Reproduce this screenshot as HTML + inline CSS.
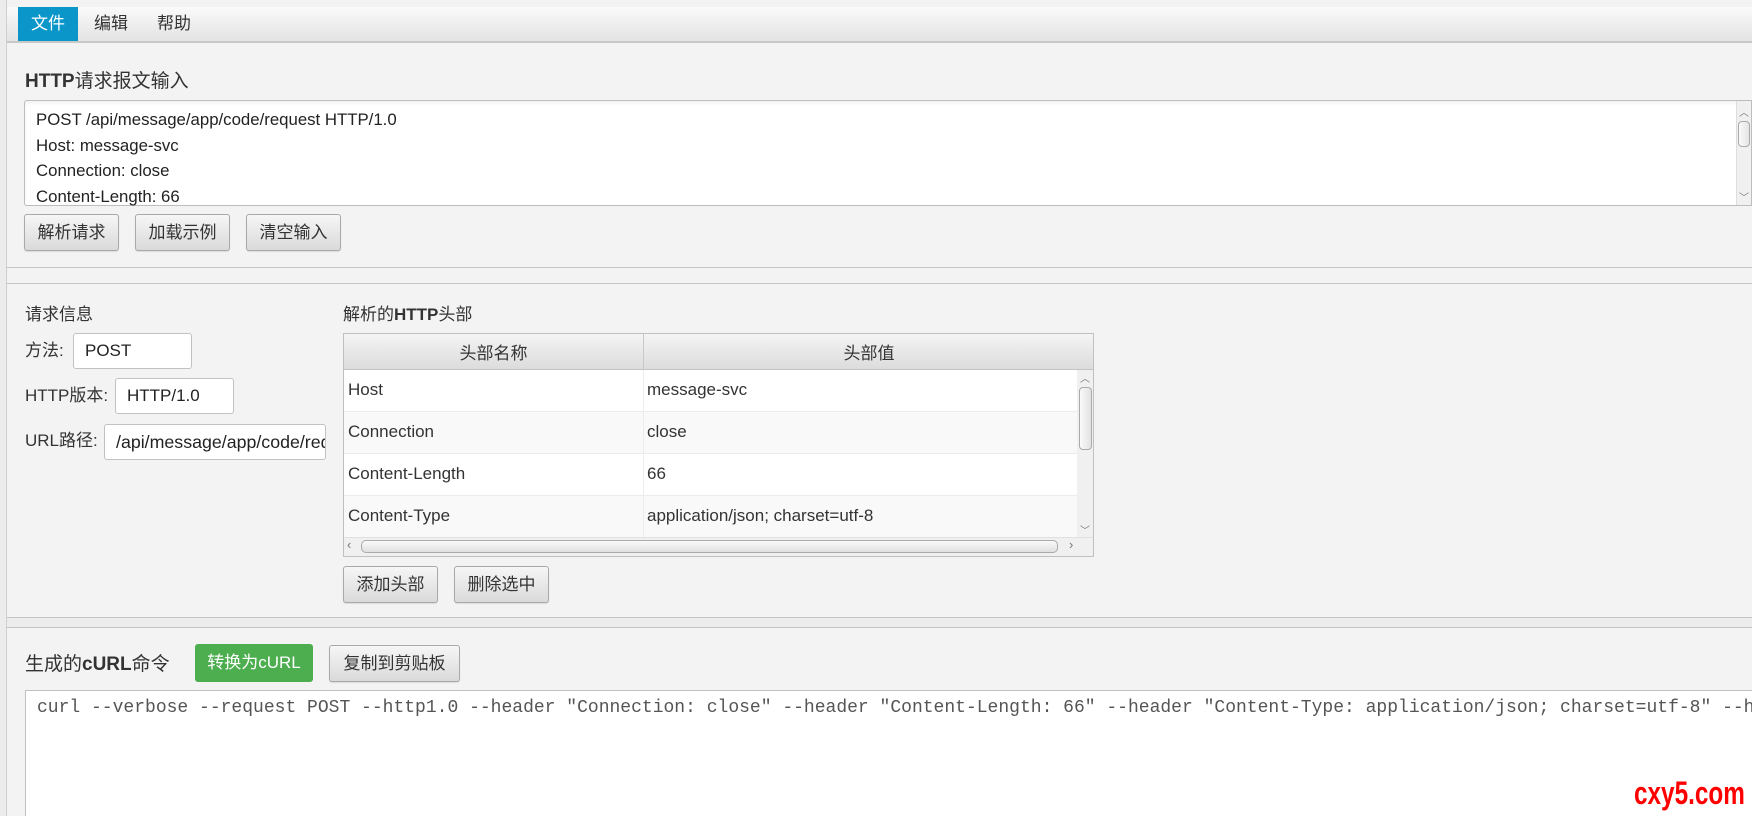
<!DOCTYPE html>
<html><head><meta charset="utf-8"><style>
*{box-sizing:border-box;margin:0;padding:0}
body{width:1752px;height:816px;overflow:hidden;background:#f3f3f3;font-family:"Liberation Sans","Noto Sans CJK SC",sans-serif;font-size:17px;color:#333;position:relative}
.a{position:absolute}
.menubar{left:7px;top:7px;width:1745px;height:36px;background:linear-gradient(#fafafa,#e3e3e3);border-bottom:2px solid #c8c8c8}
.mi{top:0;height:34px;line-height:34px;font-size:17px;color:#333}
.btn{background:linear-gradient(#f6f6f6,#dadada);border:1px solid #a9a9a9;border-radius:3px;text-align:center;font-size:17px;color:#333;box-shadow:0 1px 1px rgba(0,0,0,.1)}
.inp{background:#fff;border:1px solid #c2c2c2;border-radius:3px;padding-left:11px;font-size:17px;color:#222;white-space:nowrap;overflow:hidden}
.sep{left:7px;width:1745px;height:1px;background:#c4c4c4}
.row{position:absolute;left:0;width:770px;height:42px;border-bottom:1px solid #ececec}
.row span{position:absolute;top:10px;font-size:17px;color:#333}
</style></head><body>
<div class="a" style="left:0;top:0;width:7px;height:816px;background:#ececec;border-right:1px solid #cfcfcf"></div>
<div class="a menubar"></div>
<div class="a mi" style="left:18px;top:7px;width:60px;background:#0a96c8;color:#fff;text-align:center">文件</div>
<div class="a mi" style="left:94px;top:7px">编辑</div>
<div class="a mi" style="left:157px;top:7px">帮助</div>

<div class="a" style="left:25px;top:66px;font-size:19px;color:#333"><b>HTTP</b>请求报文输入</div>
<div class="a" style="left:24px;top:100px;width:1728px;height:106px;background:#fff;border:1px solid #bdbdbd;border-radius:3px 0 0 3px;box-shadow:inset 0 2px 3px rgba(0,0,0,.06)">
 <div class="a" style="left:11px;top:6px;line-height:25.5px;font-size:16.8px;color:#222">POST /api/message/app/code/request HTTP/1.0<br>Host: message-svc<br>Connection: close<br>Content-Length: 66</div>
 <div class="a" style="right:0;top:0;width:15px;height:104px;background:#f0f0f0;border-left:1px solid #ddd"></div>
 <div class="a" style="right:1px;top:20px;width:12px;height:26px;border:1px solid #aaa;border-radius:4px;background:linear-gradient(90deg,#fafafa,#e4e4e4)"></div>
 <div class="a" style="right:2px;top:3px;font-size:10px;color:#777">︿</div>
 <div class="a" style="right:2px;top:88px;font-size:10px;color:#777">﹀</div>
</div>
<div class="a btn" style="left:24px;top:214px;width:95px;height:37px;line-height:35px">解析请求</div>
<div class="a btn" style="left:135px;top:214px;width:95px;height:37px;line-height:35px">加载示例</div>
<div class="a btn" style="left:246px;top:214px;width:95px;height:37px;line-height:35px">清空输入</div>

<div class="a sep" style="top:267px"></div>
<div class="a sep" style="top:283px"></div>

<div class="a" style="left:25px;top:300px">请求信息</div>
<div class="a" style="left:25px;top:336px">方法:</div>
<div class="a inp" style="left:73px;top:333px;width:119px;height:36px;line-height:34px">POST</div>
<div class="a" style="left:25px;top:381px">HTTP版本:</div>
<div class="a inp" style="left:115px;top:378px;width:119px;height:36px;line-height:34px">HTTP/1.0</div>
<div class="a" style="left:25px;top:426px">URL路径:</div>
<div class="a inp" style="left:104px;top:424px;width:222px;height:36px;line-height:34px;font-size:17.8px">/api/message/app/code/request</div>

<div class="a" style="left:343px;top:300px">解析的<b>HTTP</b>头部</div>
<div class="a" style="left:343px;top:333px;width:751px;height:224px;border:1px solid #c0c0c0;background:#fff;overflow:hidden">
 <div class="a" style="left:0;top:0;width:751px;height:36px;background:linear-gradient(#f4f4f4,#dcdcdc);border-bottom:1px solid #c4c4c4"></div>
 <div class="a" style="left:0;top:5px;width:299px;text-align:center">头部名称</div>
 <div class="a" style="left:299px;top:0;width:1px;height:36px;background:#c8c8c8"></div>
 <div class="a" style="left:300px;top:5px;width:450px;text-align:center">头部值</div>
 <div class="a" style="left:0;top:36px;width:733px;height:167px;overflow:hidden">
  <div class="row" style="top:0;background:#fff"><span style="left:4px">Host</span><span style="left:303px">message-svc</span></div>
  <div class="row" style="top:42px;background:#f9f9f9"><span style="left:4px">Connection</span><span style="left:303px">close</span></div>
  <div class="row" style="top:84px;background:#fff"><span style="left:4px">Content-Length</span><span style="left:303px">66</span></div>
  <div class="row" style="top:126px;background:#f9f9f9"><span style="left:4px">Content-Type</span><span style="left:303px">application/json; charset=utf-8</span></div>
  <div class="a" style="left:299px;top:0;width:1px;height:167px;background:#ececec"></div>
 </div>
 <div class="a" style="left:733px;top:36px;width:17px;height:167px;background:#f0f0f0"></div>
 <div class="a" style="left:735px;top:53px;width:13px;height:63px;border:1px solid #aaa;border-radius:4px;background:linear-gradient(90deg,#fafafa,#e2e2e2)"></div>
 <div class="a" style="left:736px;top:36px;font-size:10px;color:#777">︿</div>
 <div class="a" style="left:736px;top:188px;font-size:10px;color:#777">﹀</div>
 <div class="a" style="left:0;top:203px;width:750px;height:20px;background:#f0f0f0;border-top:1px solid #e0e0e0"></div>
 <div class="a" style="left:17px;top:206px;width:697px;height:13px;border:1px solid #aaa;border-radius:5px;background:linear-gradient(#fafafa,#e0e0e0)"></div>
 <div class="a" style="left:3px;top:203px;font-size:13px;color:#777">‹</div>
 <div class="a" style="left:725px;top:203px;font-size:13px;color:#777">›</div>
</div>
<div class="a btn" style="left:343px;top:566px;width:95px;height:37px;line-height:35px">添加头部</div>
<div class="a btn" style="left:454px;top:566px;width:95px;height:37px;line-height:35px">删除选中</div>

<div class="a sep" style="top:617px"></div>
<div class="a" style="left:7px;top:618px;width:1745px;height:10px;background:#ececec;border-bottom:1px solid #c4c4c4"></div>

<div class="a" style="left:25px;top:649px;font-size:19px">生成的<b>cURL</b>命令</div>
<div class="a" style="left:195px;top:644px;width:118px;height:38px;line-height:38px;background:#4cae4f;border-radius:3px;color:#fff;text-align:center">转换为cURL</div>
<div class="a btn" style="left:329px;top:645px;width:131px;height:37px;line-height:35px">复制到剪贴板</div>
<div class="a" style="left:25px;top:690px;width:1727px;height:126px;background:#fff;border:1px solid #c0c0c0;border-right:none;border-bottom:none;overflow:hidden">
 <div class="a" style="left:11px;top:7px;white-space:nowrap;font-family:'Liberation Mono',monospace;font-size:18px;color:#555">curl --verbose --request POST --http1.0 --header "Connection: close" --header "Content-Length: 66" --header "Content-Type: application/json; charset=utf-8" --header "Host: message-svc"</div>
</div>
<div class="a" style="left:1634px;top:777px;line-height:32px;font-family:'Liberation Sans',sans-serif;font-weight:bold;font-size:32px;color:#f00;transform:scaleX(0.76);transform-origin:left;white-space:nowrap">cxy5.com</div>
</body></html>
